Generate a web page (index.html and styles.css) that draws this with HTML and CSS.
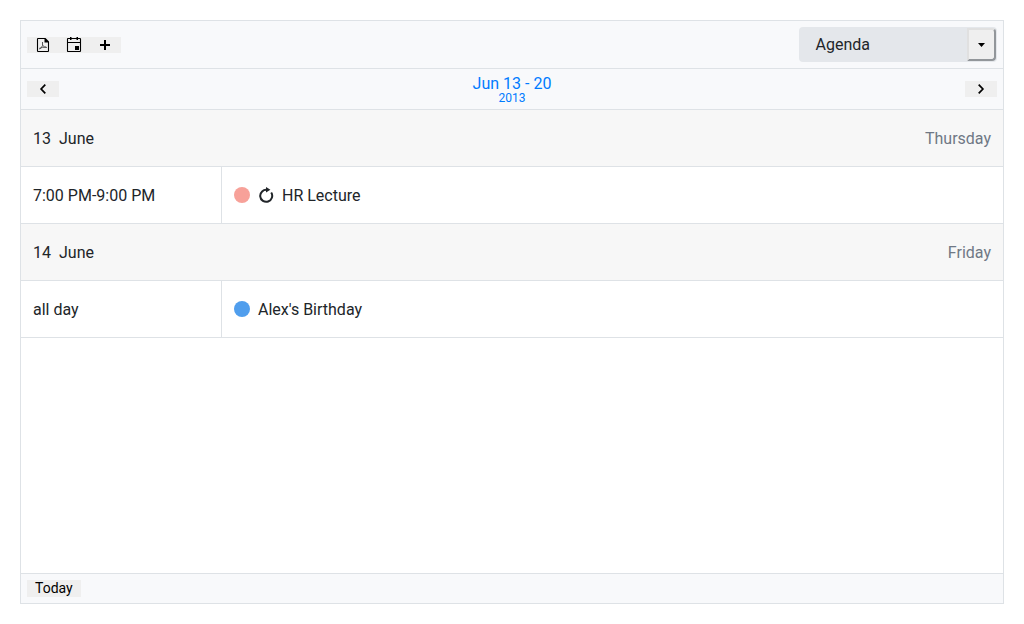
FILE: index.html
```html
<!DOCTYPE html>
<html lang="en">
<head>
<meta charset="utf-8">
<title>Scheduler</title>
<link rel="stylesheet" href="styles.css">
</head>
<body>
<main class="scheduler">
  <header class="toolbar">
    <div class="tools">
      <button class="btn" aria-label="Export to PDF"><svg class="icon" viewBox="0 0 16 16"><path d="M10 1.500H3.100q-.6 0-.6.6v11.800q0 .6.6.6h9.800q.6 0 .6-.6V5" fill="none" stroke="currentColor" stroke-width="1.100"/><path d="M9.500 1H10.500L14 4.500V5.500H9.500z" fill="currentColor"/><path d="M7.500 5v3.500q-.8 2.600-3 3.500M7.600 8.200q1.400 2.100 4.400 2.300M4.200 11.400q3.200-1.400 6.800-1.200" fill="none" stroke="#444" stroke-width=".9"/></svg></button>
      <button class="btn" aria-label="Calendar"><svg class="icon" viewBox="0 0 16 16"><path d="M2.100 1.500h11.800q.6 0 .6.6v11.800q0 .6-.6.6H2.100q-.6 0-.6-.6V2.100q0-.6.6-.6zM1.500 5.500h13" fill="none" stroke="currentColor" stroke-width="1.100"/><path d="M4 0h1.500v3H4zM10.500 0H12v3h-1.500zM9 9h4v4H9z" fill="currentColor"/></svg></button>
      <button class="btn" aria-label="Add event"><svg class="icon" viewBox="0 0 16 16"><path d="M8 3v10M3 8h10" fill="none" stroke="currentColor" stroke-width="2"/></svg></button>
    </div>
    <div class="select">
      <span class="select-value">Agenda</span>
      <button class="select-toggle" aria-label="Choose view"><svg class="caret" viewBox="0 0 7 4"><path d="M0 0h7L3.500 4z" fill="currentColor"/></svg></button>
    </div>
  </header>
  <nav class="navigator">
    <button class="btn" aria-label="Previous"><svg class="icon" viewBox="0 0 16 16"><path d="M10.300 3.600 6.100 8l4.200 4.400" fill="none" stroke="currentColor" stroke-width="1.700"/></svg></button>
    <div class="range"><span class="range-days">Jun 13 - 20</span><span class="range-year">2013</span></div>
    <button class="btn" aria-label="Next"><svg class="icon" viewBox="0 0 16 16"><path d="M5.700 3.600 9.900 8l-4.200 4.400" fill="none" stroke="currentColor" stroke-width="1.700"/></svg></button>
  </nav>
  <section class="agenda">
    <div class="day"><span class="date"><span>13</span><span>June</span></span><span class="weekday">Thursday</span></div>
    <div class="event">
      <div class="time">7:00 PM-9:00 PM</div>
      <div class="details"><span class="dot dot-red"></span><svg class="icon" viewBox="0 0 16 16"><path d="M9.200 2.900A6 6 0 1 0 13.200 5.500" fill="none" stroke="currentColor" stroke-width="2"/><path d="M8 0v5.600l4.400-2.800z" fill="currentColor"/></svg><span>HR Lecture</span></div>
    </div>
    <div class="day"><span class="date"><span>14</span><span>June</span></span><span class="weekday">Friday</span></div>
    <div class="event">
      <div class="time">all day</div>
      <div class="details"><span class="dot dot-blue"></span><span>Alex's Birthday</span></div>
    </div>
  </section>
  <footer class="footer"><button class="today">Today</button></footer>
</main>
</body>
</html>
```
FILE: styles.css
```css
* { box-sizing: border-box; }

body {
  margin: 0;
  padding: 20px;
  background: #fff;
  color: #212529;
  font: 16px/26px Roboto, sans-serif;
}

button {
  margin: 0;
  border: 0;
  background: #efefef;
  color: #000;
  font-family: inherit;
}

.scheduler {
  display: flex;
  flex-direction: column;
  height: 584px;
  border: 1px solid #dee2e6;
}

.toolbar,
.navigator,
.footer {
  display: flex;
  align-items: center;
  justify-content: space-between;
  padding: 0 6px;
  background: #f8f9fb;
}

.toolbar { height: 48px; border-bottom: 1px solid #dee2e6; }
.navigator { height: 41px; border-bottom: 1px solid #dee2e6; }
.footer { height: 30px; border-top: 1px solid #dee2e6; }

.tools { display: flex; padding-top: 1px; }

.btn {
  display: flex;
  width: 32px;
  height: 16px;
  padding: 0 8px;
}

.tools .btn + .btn { margin-left: -1px; }

.icon { display: block; width: 16px; height: 16px; flex: none; }

.select {
  display: flex;
  align-items: center;
  justify-content: space-between;
  width: 198px;
  height: 35px;
  padding: 0 1px 0 16.5px;
  border-radius: 4px;
  background: #e4e7eb;
}

.select-toggle {
  display: flex;
  align-items: center;
  justify-content: center;
  width: 29px;
  height: 33px;
  padding: 0;
  border: 2px solid;
  border-color: #e0e0e0 #92969a #92969a #e0e0e0;
  border-radius: 0 4px 4px 0;
}

.caret { display: block; width: 7px; height: 4px; }

.range {
  display: flex;
  flex-direction: column;
  align-items: center;
  padding-top: 2px;
  color: #007bff;
}

.range-days { line-height: 16px; }
.range-year { font-size: 12px; line-height: 12px; }

.agenda { flex: 1; }

.day,
.event {
  display: flex;
  height: 57px;
  border-bottom: 1px solid #dee2e6;
}

.day {
  align-items: center;
  justify-content: space-between;
  padding: 1px 12px 0;
  background: #f7f7f7;
}

.date { display: flex; gap: 8px; }
.weekday { color: #6f7885; }

.time,
.details {
  display: flex;
  align-items: center;
  padding: 0 12px;
}

.time { width: 201px; padding-top: 1px; border-right: 1px solid #dee2e6; }
.details { gap: 8px; }
.details span:last-child { padding-top: 1px; }

.dot { width: 16px; height: 16px; border-radius: 50%; }
.dot-red { background: #f7a199; }
.dot-blue { background: #509eed; }

.today {
  height: 17px;
  padding: 0 8px;
  font-size: 14px;
  line-height: 17px;
}
```
